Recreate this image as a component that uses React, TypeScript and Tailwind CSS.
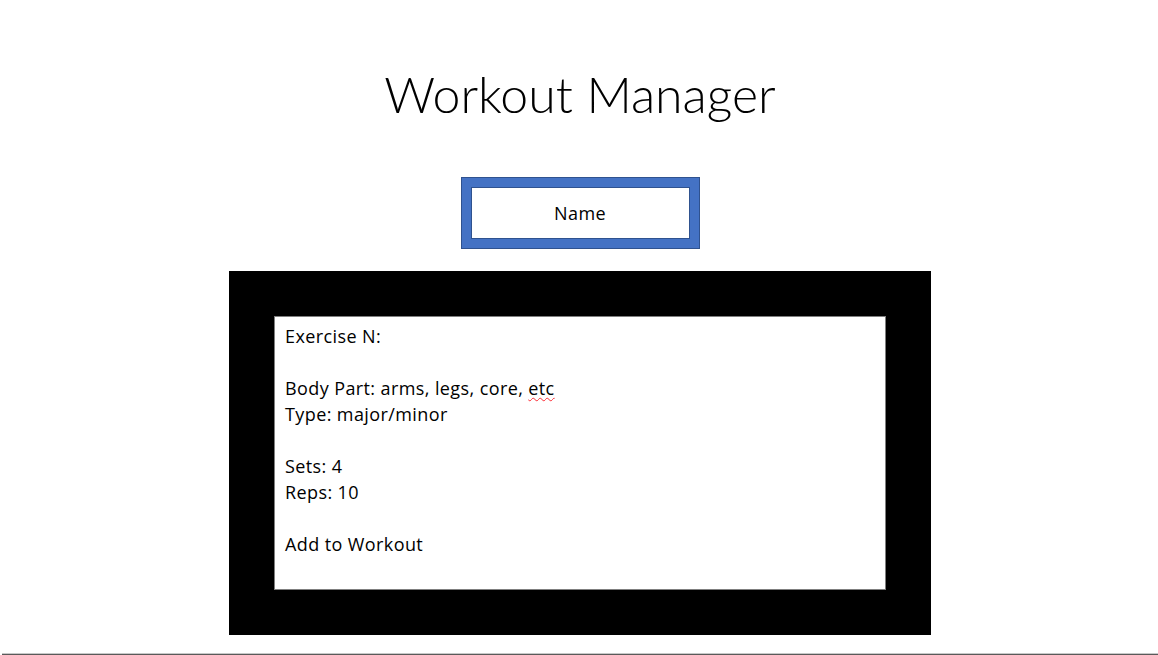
export default function App() {
  const title = { fontFamily: "Lato, 'Open Sans', sans-serif" };
  const body = { fontFamily: "'Open Sans', 'Noto Sans', sans-serif" };
  return (
    <div className="w-full h-[655px] bg-white flex flex-col items-center pl-[2px]">
      <h1 className="mt-[62px] h-[64px] text-[50px] leading-[64px] font-light text-black" style={title}>
        Workout Manager
      </h1>
      <div className="mt-[51px] w-[239px] h-[72px] border border-[#2f528f] bg-[#4472c4] p-[9px]">
        <div
          className="w-full h-full bg-white border border-[#2f528f] flex items-center justify-center text-[18px] tracking-[0.4px] text-black"
          style={body}
        >
          Name
        </div>
      </div>
      <div className="mt-[22px] w-[702px] h-[364px] bg-black p-[45px]">
        <div
          className="w-full h-full bg-white border border-[#7f7f7f] pl-[10px] pt-[6px] text-[18px] tracking-[0.4px] leading-[26px] text-black"
          style={body}
        >
          <div>Exercise N:</div>
          <div>&nbsp;</div>
          <div>
            Body Part: arms, legs, core,{" "}
            <span className="underline decoration-wavy decoration-red-500 decoration-1 underline-offset-2">etc</span>
          </div>
          <div>Type: major/minor</div>
          <div>&nbsp;</div>
          <div>Sets: 4</div>
          <div>Reps: 10</div>
          <div>&nbsp;</div>
          <div>Add to Workout</div>
        </div>
      </div>
      <div className="mt-auto w-full h-[2px] border-t border-[#c8c8c8] bg-[#5a5a5a]" />
    </div>
  );
}
